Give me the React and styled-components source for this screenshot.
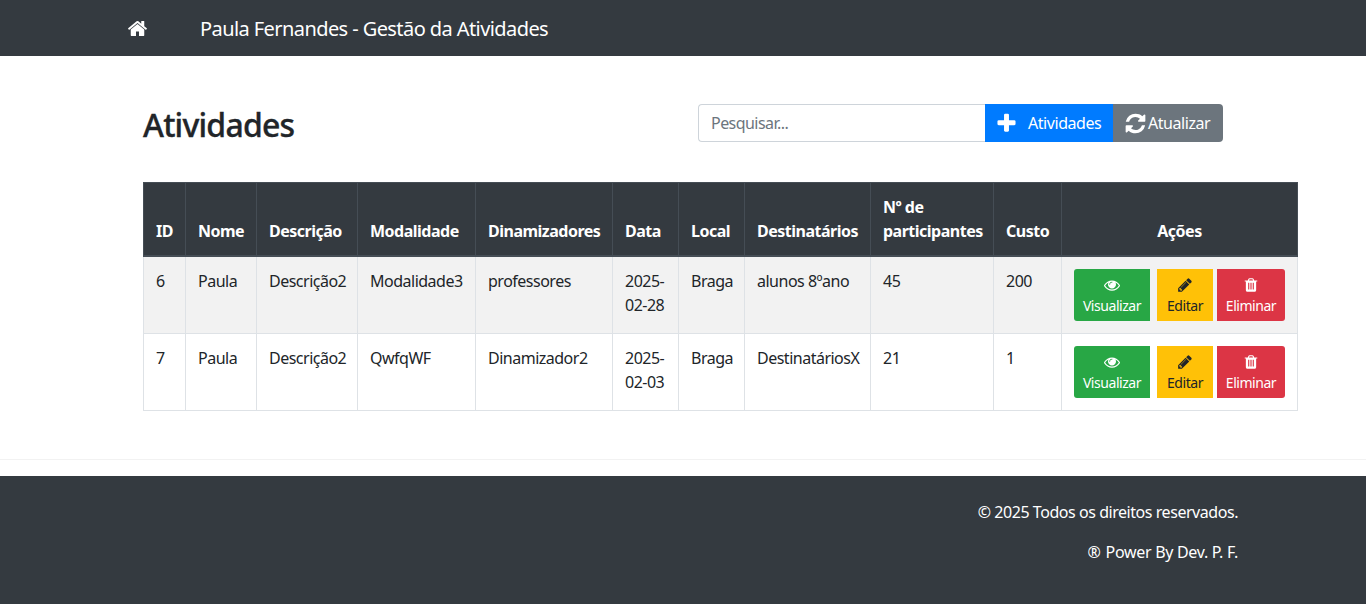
import React from "react";
import styled, { createGlobalStyle, css } from "styled-components";

const GlobalStyle = createGlobalStyle`
  * { box-sizing: border-box; }
  body {
    margin: 0;
    background: #fff;
    color: #212529;
    font-family: "Noto Sans", "Open Sans", sans-serif;
    font-size: 16px;
    line-height: 24px;
    letter-spacing: -0.45px;
  }
`;

// font awesome 4 glyphs, 1792 box
const glyphs = {
  home: "M1472 992v480q0 26-19 45t-45 19h-384v-384h-256v384h-384q-26 0-45-19t-19-45v-480q0-1 .5-3t.5-3l575-474 575 474q1 2 1 6zm223-69l-62 74q-8 9-21 11h-3q-13 0-21-7l-692-577-692 577q-12 8-24 7-13-2-21-11l-62-74q-8-10-7-23.5t11-21.5l719-599q32-26 76-26t76 26l244 204v-195q0-14 9-23t23-9h192q14 0 23 9t9 23v408l219 182q10 8 11 21.5t-7 23.5z",
  plus: "M1600 736v192q0 40-28 68t-68 28h-416v416q0 40-28 68t-68 28h-192q-40 0-68-28t-28-68v-416h-416q-40 0-68-28t-28-68v-192q0-40 28-68t68-28h416v-416q0-40 28-68t68-28h192q40 0 68 28t28 68v416h416q40 0 68 28t28 68z",
  refresh: "M1639 1056q0 5-1 7-64 268-268 434.5t-478 166.5q-146 0-282.5-55t-243.5-157l-129 129q-19 19-45 19t-45-19-19-45v-448q0-26 19-45t45-19h448q26 0 45 19t19 45-19 45l-137 137q71 66 161 102t187 36q134 0 250-65t186-179q11-17 53-117 8-23 30-23h192q13 0 22.5 9.5t9.5 22.5zm25-800v448q0 26-19 45t-45 19h-448q-26 0-45-19t-19-45 19-45l138-138q-148-137-349-137-134 0-250 65t-186 179q-11 17-53 117-8 23-30 23h-199q-13 0-22.5-9.5t-9.5-22.5v-7q65-268 270-434.5t480-166.5q146 0 284 55.5t245 156.5l130-129q19-19 45-19t45 19 19 45z",
  eye: "M1664 960q-152-236-381-353 61 104 61 225 0 185-131.5 316.5t-316.5 131.5-316.5-131.5-131.5-316.5q0-121 61-225-229 117-381 353 133 205 333.5 326.5t434.5 121.5 434.5-121.5 333.5-326.5zm-720-384q0-20-14-34t-34-14q-125 0-214.5 89.5t-89.5 214.5q0 20 14 34t34 14 34-14 14-34q0-86 61-147t147-61q20 0 34-14t14-34zm848 384q0 34-20 69-140 230-376.5 368.5t-499.5 138.5-499.5-139-376.5-368q-20-35-20-69t20-69q140-229 376.5-368t499.5-139 499.5 139 376.5 368q20 35 20 69z",
  pencil: "M491 1536l91-91-235-235-91 91v107h128v128h107zm523-928q0-22-22-22-10 0-17 7l-542 542q-7 7-7 17 0 22 22 22 10 0 17-7l542-542q7-7 7-17zm-54-192l416 416-832 832h-416v-416zm683 96q0 53-37 90l-166 166-416-416 166-165q36-38 90-38 53 0 91 38l235 234q37 39 37 91z",
  trash: "M704 1376v-704q0-14-9-23t-23-9h-64q-14 0-23 9t-9 23v704q0 14 9 23t23 9h64q14 0 23-9t9-23zm256 0v-704q0-14-9-23t-23-9h-64q-14 0-23 9t-9 23v704q0 14 9 23t23 9h64q14 0 23-9t9-23zm256 0v-704q0-14-9-23t-23-9h-64q-14 0-23 9t-9 23v704q0 14 9 23t23 9h64q14 0 23-9t9-23zm-544-992h448l-48-117q-7-9-17-11h-317q-10 2-17 11zm928 32v64q0 14-9 23t-23 9h-96v948q0 83-47 143.5t-113 60.5h-832q-66 0-113-58.5t-47-141.5v-952h-96q-14 0-23-9t-9-23v-64q0-14 9-23t23-9h309l70-167q15-37 54-63t79-26h320q40 0 79 26t54 63l70 167h309q14 0 23 9t9 23z",
};

const IconSvg = styled.svg`
  display: block;
  flex: none;
  fill: currentColor;
`;

function Icon({ name, size }) {
  return (
    <IconSvg viewBox="0 0 1792 1792" width={size} height={size}>
      <path d={glyphs[name]} />
    </IconSvg>
  );
}

const Navbar = styled.nav`
  height: 56px;
  background: #343a40;
  color: #fff;
  display: flex;
  align-items: center;
  padding-left: 127px;
  gap: 52px;
`;

const Brand = styled.span`
  font-size: 20px;
  letter-spacing: -0.58px;
  padding-top: 2px;
`;

const Main = styled.main`
  padding: 48px 68px 48px 143px;
`;

const TopRow = styled.div`
  display: flex;
  align-items: center;
  justify-content: space-between;
  padding-right: 75px;
  margin-bottom: 40px;
`;

const Title = styled.h1`
  margin: 0;
  height: 38px;
  padding-top: 2px;
  font-size: 32px;
  line-height: 38px;
  font-weight: 500;
  letter-spacing: -0.8px;
  -webkit-text-stroke: 0.35px #212529;
`;

const Toolbar = styled.div`
  display: flex;
  height: 38px;
`;

const Search = styled.input`
  width: 287px;
  padding: 6px 12px;
  border: 1px solid #ced4da;
  border-right: 0;
  border-radius: 4px 0 0 4px;
  font: inherit;
  letter-spacing: -0.55px;
  color: #495057;
  outline: none;
  &::placeholder { color: #6c757d; opacity: 1; }
`;

const ToolButton = styled.button`
  display: flex;
  align-items: center;
  gap: ${({ $gap }) => $gap}px;
  width: ${({ $width }) => $width}px;
  padding: 0 0 0 ${({ $pad }) => $pad}px;
  border: 0;
  color: #fff;
  background: ${({ $bg }) => $bg};
  border-radius: ${({ $radius }) => $radius || 0};
  font: inherit;
  letter-spacing: inherit;
  white-space: nowrap;
`;

const Table = styled.table`
  width: 1154px;
  table-layout: fixed;
  border-collapse: collapse;
`;

const Col = styled.col`
  width: ${({ $w }) => $w}px;
`;

const Th = styled.th`
  padding: ${({ $center }) => ($center ? "12px" : "12px 4px 12px 12px")};
  background: #343a40;
  color: #fff;
  border: 1px solid #454d55;
  border-bottom-width: 2px;
  vertical-align: bottom;
  font-weight: 700;
  letter-spacing: -0.5px;
  text-align: ${({ $center }) => ($center ? "center" : "left")};
`;

const Tr = styled.tr`
  background: ${({ $striped }) => ($striped ? "#f2f2f2" : "#fff")};
`;

const Td = styled.td`
  padding: 12px 4px 12px 12px;
  border: 1px solid #dee2e6;
  vertical-align: top;
  letter-spacing: -0.5px;
`;

const DateText = styled.span`
  display: block;
  width: 46px;
`;

const Actions = styled.div`
  display: flex;
`;

const edges = {
  left: css`border-radius: 3px 0 0 3px;`,
  right: css`border-radius: 0 3px 3px 0;`,
};

const ActionButton = styled.button`
  display: flex;
  flex-direction: column;
  align-items: center;
  width: ${({ $width }) => $width}px;
  margin-left: ${({ $gap }) => $gap || 0}px;
  height: 52px;
  padding: 5px 0;
  border: 0;
  background: ${({ $bg }) => $bg};
  color: ${({ $fg }) => $fg};
  font: inherit;
  font-size: 14px;
  line-height: 21px;
  letter-spacing: -0.45px;
  ${({ $edge }) => edges[$edge]}
  svg { margin: 3px 0 2px; }
`;

const Divider = styled.hr`
  margin: 0 0 16px;
  border: 0;
  border-top: 1px solid rgba(0, 0, 0, 0.05);
`;

const Footer = styled.footer`
  height: 128px;
  background: #343a40;
  color: #fff;
  padding: 24px 128px 0 0;
  text-align: right;
`;

const FooterLine = styled.p`
  margin: 0 0 16px;
  letter-spacing: ${({ $spacing }) => $spacing || "inherit"};
`;

const RegMark = styled.span`
  font-size: 16px;
  margin-right: 5px;
`;

const columns = [42, 71, 101, 118, 137, 66, 66, 126, 123, 68, 236];

const headers = ["ID", "Nome", "Descrição", "Modalidade", "Dinamizadores", "Data", "Local", "Destinatários", "Nº de participantes", "Custo"];

const rows = [
  ["6", "Paula", "Descrição2", "Modalidade3", "professores", "2025-02-28", "Braga", "alunos 8ºano", "45", "200"],
  ["7", "Paula", "Descrição2", "QwfqWF", "Dinamizador2", "2025-02-03", "Braga", "DestinatáriosX", "21", "1"],
];

function App() {
  return (
    <>
      <GlobalStyle />
      <Navbar>
        <Icon name="home" size={21} />
        <Brand>Paula Fernandes - Gestão da Atividades</Brand>
      </Navbar>
      <Main>
        <TopRow>
          <Title>Atividades</Title>
          <Toolbar>
            <Search placeholder="Pesquisar..." />
            <ToolButton $bg="#007bff" $width={128} $pad={10} $gap={10}>
              <Icon name="plus" size={23} /> Atividades
            </ToolButton>
            <ToolButton $bg="#6c757d" $width={110} $pad={11} $gap={1} $radius="0 4px 4px 0">
              <Icon name="refresh" size={23} /> Atualizar
            </ToolButton>
          </Toolbar>
        </TopRow>
        <Table>
          <colgroup>
            {columns.map((w, i) => <Col key={i} $w={w} />)}
          </colgroup>
          <thead>
            <tr>
              {headers.map((h) => <Th key={h}>{h}</Th>)}
              <Th $center>Ações</Th>
            </tr>
          </thead>
          <tbody>
            {rows.map((row, i) => (
              <Tr key={row[0]} $striped={i === 0}>
                {row.map((cell, j) => (
                  <Td key={j}>{j === 5 ? <DateText>{cell}</DateText> : cell}</Td>
                ))}
                <Td>
                  <Actions>
                    <ActionButton $bg="#28a745" $fg="#fff" $width={76} $edge="left">
                      <Icon name="eye" size={16} /> Visualizar
                    </ActionButton>
                    <ActionButton $bg="#ffc107" $fg="#212529" $width={56} $gap={7}>
                      <Icon name="pencil" size={16} /> Editar
                    </ActionButton>
                    <ActionButton $bg="#dc3545" $fg="#fff" $width={68} $gap={4} $edge="right">
                      <Icon name="trash" size={16} /> Eliminar
                    </ActionButton>
                  </Actions>
                </Td>
              </Tr>
            ))}
          </tbody>
        </Table>
      </Main>
      <Divider />
      <Footer>
        <FooterLine>© 2025 Todos os direitos reservados.</FooterLine>
        <FooterLine $spacing="-0.3px"><RegMark>®</RegMark>Power By Dev. P. F.</FooterLine>
      </Footer>
    </>
  );
}

export default App;
